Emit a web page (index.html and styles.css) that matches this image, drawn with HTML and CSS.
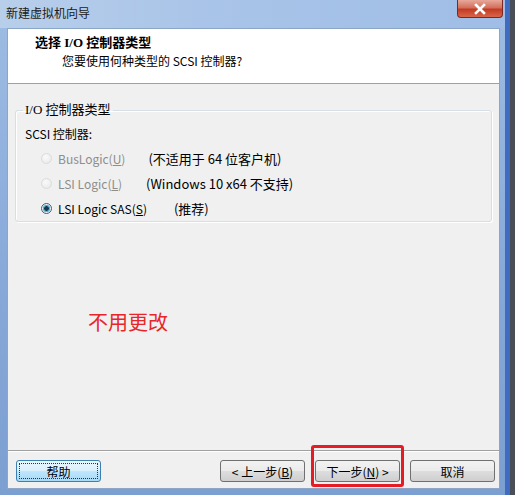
FILE: index.html
```html
<!DOCTYPE html>
<html lang="zh-CN">

<head>
    <meta charset="UTF-8">
    <title>新建虚拟机向导</title>
    <link rel="stylesheet" href="styles.css">
</head>

<body>
    <div class="window">
        <div class="title-bar">
            <span class="title">新建虚拟机向导</span>
            <span class="close-button">
                <svg width="14" height="12" viewBox="0 0 14 12">
                    <path d="M3 2 L11 10 M11 2 L3 10" stroke="#fff" stroke-width="2.6" stroke-linecap="square" />
                </svg>
            </span>
        </div>

        <div class="client">
            <div class="wizard-header">
                <h1>选择 I/O 控制器类型</h1>
                <p>您要使用何种类型的 SCSI 控制器?</p>
            </div>

            <div class="wizard-body">
                <fieldset class="group-box">
                    <legend>I/O 控制器类型</legend>
                    <div class="group-label">SCSI 控制器:</div>

                    <div class="option disabled">
                        <span class="radio"></span>
                        <span class="option-name">BusLogic(<u>U</u>)</span>
                        <span class="option-note note-1">(不适用于 64 位客户机)</span>
                    </div>
                    <div class="option disabled">
                        <span class="radio"></span>
                        <span class="option-name">LSI Logic(<u>L</u>)</span>
                        <span class="option-note note-2">(Windows 10 x64 不支持)</span>
                    </div>
                    <div class="option">
                        <span class="radio checked"></span>
                        <span class="option-name">LSI Logic SAS(<u>S</u>)</span>
                        <span class="option-note note-3">(推荐)</span>
                    </div>
                </fieldset>

                <div class="remark">不用更改</div>
            </div>

            <div class="wizard-footer">
                <button class="btn btn-focus">帮助</button>
                <div class="nav-buttons">
                    <button class="btn">&lt; 上一步(<u>B</u>)</button>
                    <button class="btn">下一步(<u>N</u>) &gt;</button>
                    <button class="btn">取消</button>
                </div>
            </div>

            <!-- marca em vermelho em volta do botão seguinte -->
            <div class="highlight"></div>
        </div>
    </div>
</body>

</html>
```

FILE: styles.css
```css
body {
    margin: 0;
    padding: 0;
    background-color: #4a4f57;
    font-family: "Noto Sans CJK SC", "Noto Sans", sans-serif;
    font-size: 12px;
    color: #000;
}

.window {
    width: 510px;
    height: 495px;
    box-sizing: border-box;
    display: flex;
    flex-direction: column;
    padding: 0 5px 6px 7px;
    background: linear-gradient(180deg, #b4cdeb 0%, #9cbbe3 6%, #86a8d8 60%, #7c9fd2 100%);
    border-right: 5px solid #3f6cc0;
}

.title-bar {
    height: 28px;
    display: flex;
    align-items: flex-start;
    justify-content: space-between;
    background: linear-gradient(90deg, #b8cfeb 0%, #a9c4e8 40%, #9fbde6 100%);
    margin: 0 -5px 0 -7px;
    padding: 0 2px 0 7px;
}

.title {
    margin-top: 5px;
    margin-left: -1px;
    color: #1a1a1a;
    font-size: 12px;
    line-height: 16px;
}

.close-button {
    width: 46px;
    height: 18px;
    display: flex;
    align-items: center;
    justify-content: center;
    border: 1px solid #7a2a22;
    border-top: none;
    border-radius: 0 0 4px 4px;
    background: linear-gradient(180deg, #e8a89a 0%, #d3705c 45%, #c23b22 55%, #d9664a 100%);
    box-sizing: border-box;
}

.client {
    flex: 1;
    display: flex;
    flex-direction: column;
    background-color: #f0f0f0;
    border: 1px solid #8ea6c6;
    position: relative;
}

.wizard-header {
    height: 55px;
    background-color: #fff;
    border-bottom: 1px solid #a0a0a0;
    padding: 5px 0 0 27px;
    box-sizing: border-box;
}

.wizard-header h1 {
    margin: 0;
    font-family: "Liberation Serif", "Noto Sans CJK SC", serif;
    font-size: 13px;
    font-weight: bold;
    line-height: 18px;
}

.wizard-header p {
    margin: 0 0 0 27px;
    line-height: 18px;
}

.wizard-body {
    flex: 1;
    padding: 18px 7px 0 7px;
}

.group-box {
    margin: 0;
    padding: 4px 0 0 9px;
    border: 1px solid #d5dfe5;
    border-radius: 3px;
    box-shadow: inset 1px 1px 0 #fff, 1px 1px 0 #fff;
}

.group-box legend {
    padding: 0 2px;
    margin-left: -2px;
    font-family: "Liberation Serif", "Noto Sans CJK SC", serif;
    font-size: 13px;
    line-height: 16px;
}

.group-label {
    margin-top: 3px;
    margin-bottom: 3px;
    line-height: 18px;
}

.option {
    display: flex;
    align-items: center;
    height: 25px;
    padding-left: 16px;
}

.option.disabled .option-name {
    color: #8d8d8d;
}

.radio {
    width: 11px;
    height: 11px;
    border-radius: 50%;
    box-sizing: border-box;
    border: 1px solid #dcdcdc;
    background: radial-gradient(circle at 40% 35%, #fafafa, #e6e6e6);
    margin-right: 6px;
}

.radio.checked {
    border-color: #3d5f7c;
    background: radial-gradient(circle, #13384f 0 2px, #5ab0d0 2.6px 3.4px, #e8f0f4 4px);
}

.option-note {
    font-size: 13px;
}

.note-1 {
    margin-left: 23px;
}

.note-2 {
    margin-left: 24px;
}

.note-3 {
    margin-left: 27px;
}

.remark {
    margin: 88px 0 0 73px;
    color: #e8262a;
    font-size: 20px;
    line-height: 24px;
}

.wizard-footer {
    height: 38px;
    display: flex;
    align-items: flex-start;
    justify-content: space-between;
    border-top: 1px solid #a0a0a0;
    box-shadow: inset 0 1px 0 #fff;
    padding: 9px 4px 0 8px;
    box-sizing: border-box;
}

.nav-buttons {
    display: flex;
    gap: 10px;
}

.btn {
    width: 85px;
    height: 22px;
    padding: 0;
    font-family: "Noto Sans CJK SC", "Noto Sans", sans-serif;
    font-size: 12px;
    color: #000;
    border: 1px solid #707070;
    border-radius: 3px;
    background: linear-gradient(180deg, #f2f2f2 0%, #ebebeb 48%, #dddddd 52%, #cfcfcf 100%);
}

.btn-focus {
    border-color: #3c7fb1;
    outline: 1px dotted #333;
    outline-offset: -4px;
    background: linear-gradient(180deg, #eaf6fd 0%, #d9f0fc 48%, #bee6fd 52%, #a7d9f5 100%);
}

.highlight {
    position: absolute;
    left: 303px;
    bottom: 1px;
    width: 87px;
    height: 36px;
    border: 3px solid #e51c23;
    border-radius: 3px;
}
```
